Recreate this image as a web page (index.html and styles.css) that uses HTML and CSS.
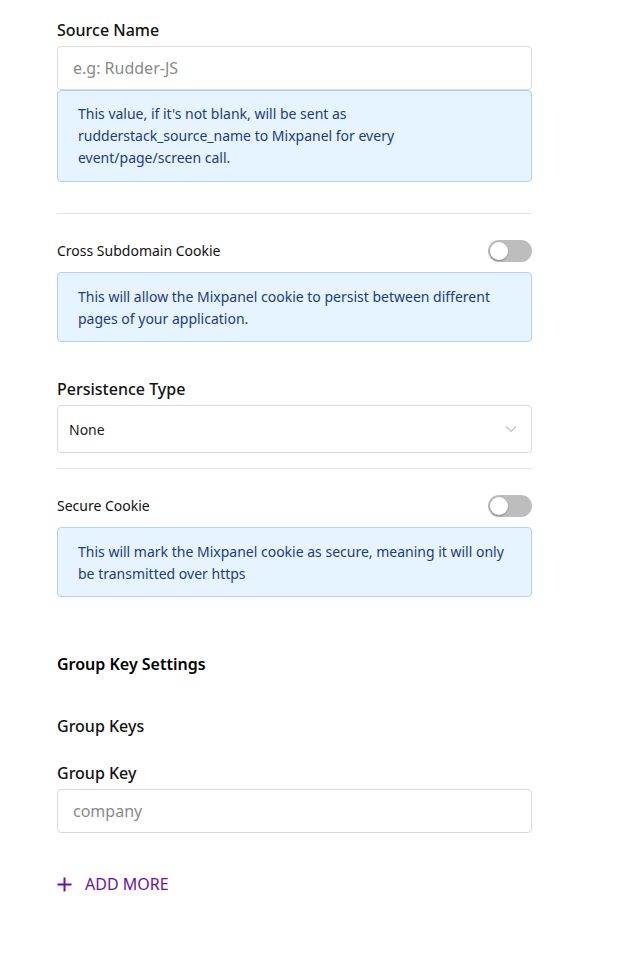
FILE: index.html
```html
<!DOCTYPE html>
<html>
<head>
<meta charset="utf-8">
<link rel="stylesheet" href="styles.css">
</head>
<body>
<div class="form">
  <div class="field">
    <label class="label">Source Name</label>
    <div class="input placeholder">e.g: Rudder-JS</div>
    <div class="info info-attached">This value, if it's not blank, will be sent as rudderstack_source_name to Mixpanel for every event/page/screen call.</div>
  </div>
  <hr class="divider divider-1">
  <div class="toggle-row toggle-row-1">
    <span class="toggle-label">Cross Subdomain Cookie</span>
    <span class="switch"><span class="knob"></span></span>
  </div>
  <div class="info info-toggle">This will allow the Mixpanel cookie to persist between different pages of your application.</div>
  <div class="field field-persist">
    <label class="label">Persistence Type</label>
    <div class="select">
      <span>None</span>
      <svg class="chev" width="12" height="8" viewBox="0 0 12 8"><path d="M1 1.5 L6 6.5 L11 1.5" fill="none" stroke="#bfbfbf" stroke-width="1.2"/></svg>
    </div>
  </div>
  <hr class="divider divider-2">
  <div class="toggle-row toggle-row-2">
    <span class="toggle-label">Secure Cookie</span>
    <span class="switch"><span class="knob"></span></span>
  </div>
  <div class="info info-toggle">This will mark the Mixpanel cookie as secure, meaning it will only be transmitted over https</div>
  <h3 class="section-title">Group Key Settings</h3>
  <div class="sub-title">Group Keys</div>
  <div class="field field-group">
    <label class="label">Group Key</label>
    <div class="input placeholder">company</div>
  </div>
  <div class="add-more">
    <svg width="15" height="15" viewBox="0 0 15 15"><path d="M7.5 0.5 V14.5 M0.5 7.5 H14.5" stroke="#6b0fa8" stroke-width="2" fill="none"/></svg>
    <span>ADD MORE</span>
  </div>
</div>
</body>
</html>
```
FILE: styles.css
```css
* { box-sizing: border-box; }
body {
  margin: 0;
  background: #fff;
  font-family: "Noto Sans", "Open Sans", sans-serif;
  color: #000;
}
.form {
  width: 475px;
  margin-left: 57px;
  padding-top: 18px;
  display: flex;
  flex-direction: column;
}
.label {
  display: block;
  font-size: 16px;
  font-weight: 500;
  line-height: 24px;
  margin-bottom: 4px;
  color: #111;
}
.input {
  height: 44px;
  border: 1px solid #d9d9d9;
  border-radius: 4px;
  padding: 0 15px;
  display: flex;
  align-items: center;
  font-size: 16px;
}
.placeholder { color: #8a8a8a; }
.info {
  background: #e6f4ff;
  border: 1px solid #a9d3fb;
  border-radius: 4px;
  color: #1c3a87;
  font-size: 14px;
  line-height: 22px;
  padding: 13px 20px 13px 20px;
}
.info-attached {
  margin-top: 0;
  height: 92px;
  padding-top: 12px;
}
.divider {
  border: 0;
  border-top: 1px solid #e2e2e2;
  margin: 0;
}
.divider-1 { margin-top: 31px; }
.toggle-row {
  display: flex;
  justify-content: space-between;
  align-items: center;
  height: 22px;
}
.toggle-row-1 { margin-top: 26px; }
.toggle-row-2 { margin-top: 26px; }
.toggle-label {
  font-size: 14px;
  line-height: 22px;
  color: #111;
}
.switch {
  position: relative;
  width: 44px;
  height: 22px;
  border-radius: 11px;
  background: #bdbdbd;
}
.knob {
  position: absolute;
  left: 2px;
  top: 2px;
  width: 18px;
  height: 18px;
  border-radius: 50%;
  background: #fff;
  box-shadow: 0 1px 2px rgba(0,0,0,0.3);
}
.info-toggle {
  margin-top: 10px;
  height: 70px;
}
.field-persist { margin-top: 35px; }
.select {
  height: 48px;
  border: 1px solid #d9d9d9;
  border-radius: 4px;
  padding: 0 11px;
  display: flex;
  align-items: center;
  justify-content: space-between;
  font-size: 14px;
  color: #1a1a1a;
}
.chev { margin-right: 3px; }
.divider-2 { margin-top: 15px; }
.section-title {
  margin: 55px 0 0 0;
  font-size: 16px;
  font-weight: 600;
  line-height: 24px;
}
.sub-title {
  margin-top: 38px;
  font-size: 16px;
  font-weight: 500;
  line-height: 24px;
  color: #111;
}
.field-group { margin-top: 23px; }
.add-more {
  margin-top: 40px;
  display: flex;
  align-items: center;
  gap: 13px;
  color: #6b0fa8;
  font-size: 16px;
  line-height: 22px;
}
```
